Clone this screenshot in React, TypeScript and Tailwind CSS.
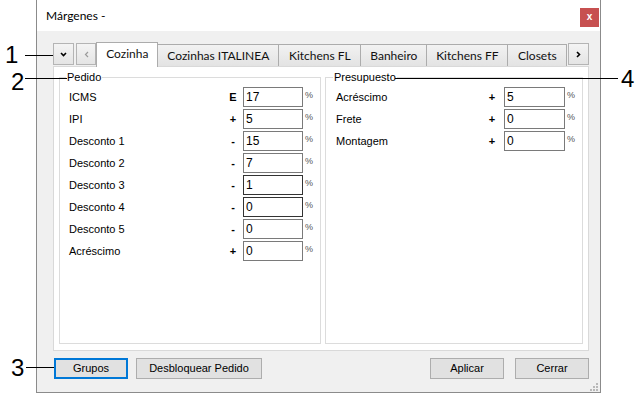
const pedido = [
  { label: 'ICMS', sign: 'E', value: '17' },
  { label: 'IPI', sign: '+', value: '5' },
  { label: 'Desconto 1', sign: '-', value: '15' },
  { label: 'Desconto 2', sign: '-', value: '7' },
  { label: 'Desconto 3', sign: '-', value: '1', dark: true },
  { label: 'Desconto 4', sign: '-', value: '0', dark: true },
  { label: 'Desconto 5', sign: '-', value: '0' },
  { label: 'Acréscimo', sign: '+', value: '0' },
]

const presupuesto = [
  { label: 'Acréscimo', sign: '+', value: '5' },
  { label: 'Frete', sign: '+', value: '0' },
  { label: 'Montagem', sign: '+', value: '0' },
]

const tabs = [
  { name: 'Cozinha', w: 'w-[62px]', active: true },
  { name: 'Cozinhas ITALINEA', w: 'w-[121px]' },
  { name: 'Kitchens FL', w: 'w-[82px]' },
  { name: 'Banheiro', w: 'w-[66px]' },
  { name: 'Kitchens FF', w: 'w-[81px]' },
  { name: 'Closets', w: 'w-[59px]' },
]

type Row = { label: string; sign: string; value: string; dark?: boolean }

function FieldRow({ row, labelW, inputW, gap }: { row: Row; labelW: string; inputW: string; gap: string }) {
  return (
    <div className="flex items-center h-[22px]">
      <span className={`${labelW} shrink-0`}>{row.label}</span>
      <span className="w-[14px] text-center font-bold">{row.sign}</span>
      <input
        readOnly
        defaultValue={row.value}
        className={`${gap} ${inputW} h-[20px] bg-white border ${row.dark ? 'border-[#333333]' : 'border-[#7a7a7a]'} pl-[2px] text-[12px] outline-none`}
      />
      <span className="ml-[2px] self-start mt-[5px] text-[9px] leading-none text-[#555]">%</span>
    </div>
  )
}

function TabButton({ children, extra = '' }: { children: React.ReactNode; extra?: string }) {
  return (
    <div className={`w-[21px] h-[22px] flex items-center justify-center border border-[#b4b4b4] bg-gradient-to-b from-[#f4f4f4] to-[#e4e4e4] ${extra}`}>
      {children}
    </div>
  )
}

export default function App() {
  return (
    <div className="relative w-[642px] h-[393px] bg-white overflow-hidden font-['Liberation_Sans',Arial,sans-serif] text-[11px] text-black">
      <div className="flex h-full pl-[36px]">
        <div className="relative flex flex-col w-[565px] h-[393px] border-x border-b border-[#8b8b8b]">
          {/* title bar */}
          <div className="flex justify-between h-[31px] bg-white shrink-0">
            <span className="pl-[9px] pt-[7px] text-[12px] font-['Lato',sans-serif]">Márgenes -</span>
            <div className="mt-[8px] mr-[1px] w-[19px] h-[19px] bg-[#c75050] flex items-center justify-center text-white text-[10px] font-bold leading-none pb-[1px]">x</div>
          </div>

          <div className="flex flex-col flex-1 bg-[#f0f0f0] pt-[12px] pl-[16px] pr-[11px]">
            {/* tab strip */}
            <div className="flex items-end h-[23px] font-['Lato',sans-serif] text-[12px] text-[#111]">
              <TabButton extra="mb-px">
                <svg width="7" height="5" viewBox="0 0 7 5"><path d="M1 1l2.5 2.5L6 1" stroke="#000" strokeWidth="1.6" fill="none" /></svg>
              </TabButton>
              <TabButton extra="mb-px ml-[2px]">
                <svg width="5" height="7" viewBox="0 0 5 7"><path d="M4 1L1.5 3.5L4 6" stroke="#9a9a9a" strokeWidth="1.2" fill="none" /></svg>
              </TabButton>
              {tabs.map(t => (
                <div
                  key={t.name}
                  className={`${t.w} shrink-0 flex items-center justify-center border-t border-r border-[#acacac] ${
                    t.active
                      ? 'h-[25px] -mb-px bg-white border-l border-b-0 relative z-10 pb-[2px]'
                      : 'h-[22px] bg-gradient-to-b from-[#f2f2f2] to-[#e3e3e3]'
                  }`}
                >
                  {t.name}
                </div>
              ))}
              <TabButton extra="mb-px ml-px w-[20px]">
                <svg width="5" height="7" viewBox="0 0 5 7"><path d="M1 1l2.5 2.5L1 6" stroke="#000" strokeWidth="1.6" fill="none" /></svg>
              </TabButton>
            </div>

            {/* tab page */}
            <div className="flex gap-[4px] h-[285px] border border-[#d9d9d9] bg-white pt-[4px] pb-[6px] px-[5px]">
              <fieldset className="w-[262px] border border-[#dcdcdc] pl-[9px] pt-[2px]">
                <legend className="-ml-[3px] px-px leading-[13px]">Pedido</legend>
                {pedido.map(r => (
                  <FieldRow key={r.label} row={r} labelW="w-[157px]" inputW="w-[60px]" gap="ml-[3px]" />
                ))}
              </fieldset>
              <fieldset className="w-[258px] border border-[#dcdcdc] pl-[10px] pt-[2px]">
                <legend className="-ml-[3px] px-px leading-[13px]">Presupuesto</legend>
                {presupuesto.map(r => (
                  <FieldRow key={r.label} row={r} labelW="w-[149px]" inputW="w-[61px]" gap="ml-[5px]" />
                ))}
              </fieldset>
            </div>

            {/* buttons */}
            <div className="flex mt-[7px]">
              <button className="ml-px w-[74px] h-[21px] border-2 border-[#0078d7] bg-[#e1e1e1]">Grupos</button>
              <button className="ml-[8px] w-[126px] h-[21px] border border-[#adadad] bg-[#e1e1e1]">Desbloquear Pedido</button>
              <div className="flex-1" />
              <button className="w-[74px] h-[21px] border border-[#adadad] bg-[#e1e1e1]">Aplicar</button>
              <button className="ml-[11px] w-[74px] h-[21px] border border-[#adadad] bg-[#e1e1e1]">Cerrar</button>
            </div>
          </div>

          {/* size grip */}
          <svg className="absolute right-[2px] bottom-[1px]" width="9" height="9" viewBox="0 0 9 9">
            {[[7, 1], [4, 4], [7, 4], [1, 7], [4, 7], [7, 7]].map(([x, y]) => (
              <rect key={`${x}-${y}`} x={x} y={y} width="2" height="2" fill="#b8b8b8" />
            ))}
          </svg>
        </div>
      </div>

      {/* callouts */}
      <span className="absolute left-[5px] top-[43px] text-[24px] leading-none">1</span>
      <div className="absolute left-[25px] top-[55px] w-[28px] h-px bg-black" />
      <span className="absolute left-[11px] top-[70px] text-[24px] leading-none">2</span>
      <div className="absolute left-[25px] top-[78px] w-[42px] h-px bg-black" />
      <span className="absolute left-[11px] top-[356px] text-[24px] leading-none">3</span>
      <div className="absolute left-[26px] top-[367px] w-[28px] h-px bg-black" />
      <span className="absolute left-[621px] top-[67px] text-[24px] leading-none">4</span>
      <div className="absolute left-[395px] top-[78px] w-[223px] h-px bg-black" />
    </div>
  )
}
